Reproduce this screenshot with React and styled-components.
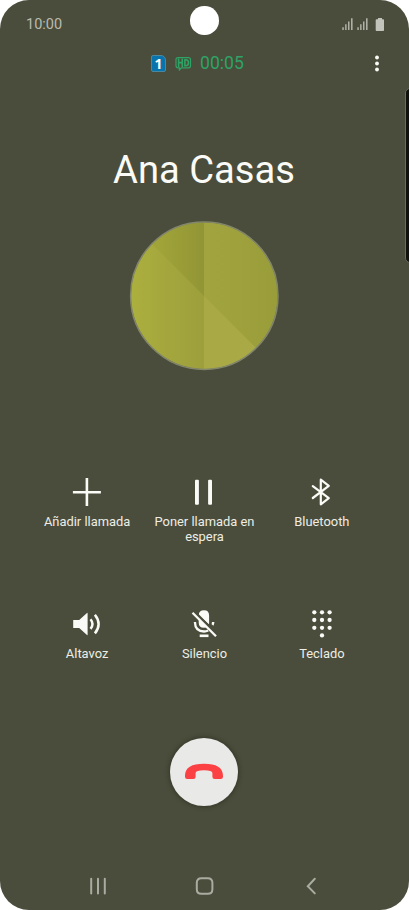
import React from "react";
import styled, { createGlobalStyle } from "styled-components";

const GlobalStyle = createGlobalStyle`
  * { box-sizing: border-box; }
  body { margin: 0; background: #fff; font-family: Roboto, "Noto Sans", sans-serif; }
  svg { display: block; flex: none; }
`;

const Screen = styled.main`
  position: relative;
  width: 409px;
  height: 910px;
  padding-right: 1px;
  display: flex;
  flex-direction: column;
  background: #4a4d3b;
  border-radius: 29px;
  overflow: hidden;
  color: #fafaf7;
`;

const StatusBar = styled.header`
  height: 48px;
  display: flex;
  align-items: center;
  justify-content: space-between;
  padding: 0 23px 0 26px;
`;

const Clock = styled.time`
  font-size: 14.5px;
  line-height: 18px;
  padding-top: 2px;
  color: #b9bbb1;
`;

const Camera = styled.div`
  position: absolute;
  left: 190px;
  top: 6px;
  width: 28.5px;
  height: 28.5px;
  border-radius: 50%;
  background: #fff;
`;

const EdgePanel = styled.div`
  position: absolute;
  right: -6px;
  top: 88px;
  width: 10px;
  height: 175px;
  border: 1px solid #6a6c60;
  border-radius: 5px;
  background: #11120e;
`;

const CallBar = styled.div`
  height: 30px;
  display: grid;
  grid-template-columns: 1fr auto 1fr;
  align-items: center;
  padding: 0 28px 0 15px;
`;

const CallInfo = styled.div`
  grid-column: 2;
  display: flex;
  align-items: center;
`;

const Duration = styled.span`
  margin-left: 8px;
  font-size: 17.6px;
  line-height: 20px;
  color: #2fa266;
`;

const MoreButton = styled.button`
  justify-self: end;
  border: 0;
  padding: 0;
  background: none;
`;

const Contact = styled.section`
  height: 292px;
  padding-top: 68px;
  display: flex;
  flex-direction: column;
  align-items: center;
`;

const Name = styled.h1`
  margin: 0 0 27px;
  font-size: 38.2px;
  line-height: 48px;
  font-weight: 400;
  white-space: nowrap;
`;

const Actions = styled.section`
  display: grid;
  grid-template-columns: repeat(3, 117.4px);
  grid-template-rows: 132px 101px;
  justify-content: center;
  margin-top: 106px;
  padding-left: 1px;
`;

const ActionButton = styled.button`
  display: flex;
  flex-direction: column;
  align-items: center;
  padding: 0;
  border: 0;
  background: none;
  color: inherit;
  font: 400 12.9px/15px Roboto, "Noto Sans", sans-serif;
`;

const ActionLabel = styled.span`
  width: 112px;
  margin-top: 6px;
  color: #ededE6;
`;

const HangUp = styled.button`
  align-self: center;
  margin: 29px 0 0;
  width: 68px;
  height: 68px;
  padding: 0;
  border: 0;
  border-radius: 50%;
  display: grid;
  place-items: center;
  background: #e9e9e7;
  box-shadow: 0 0 4px 1px rgba(35, 37, 25, 0.55);
`;

const NavBar = styled.nav`
  height: 48px;
  margin-top: auto;
  display: grid;
  grid-template-columns: repeat(3, 106.5px);
  justify-content: center;
  align-items: center;
  justify-items: center;
`;

const Signal = () => (
  <svg width="12" height="12" viewBox="0 0 12 12" fill="#aeb1a5">
    <path d="M.3 9.3h1.5V12H.3zM3.1 6.3h1.5V12H3.1zM6 3.4h1.5V12H6zM9 .3h1.6V12H9z" />
  </svg>
);

const StatusIcons = styled.div`
  display: flex;
  align-items: center;
  gap: 3px;
`;

const BatterySlot = styled.div`
  margin-left: 3px;
`;

const Battery = () => (
  <svg width="10" height="13" viewBox="0 0 10 13" fill="#c2c4bb">
    <path d="M3 0h4v1.3h1.2q.8 0 .8.8V12.2q0 .8-.8.8H1.5q-.8 0-.8-.8V2.1q0-.8.8-.8H3z" />
  </svg>
);

const SimBadge = styled.span`
  width: 15px;
  height: 17px;
  border: 1px solid #4d879d;
  border-radius: 2px 5px 2px 2px;
  background: #0874ae;
  color: #fff;
  font: 700 14px/15px "Noto Sans", sans-serif;
  text-align: center;
`;

const HdSlot = styled.span`
  margin-left: 9px;
`;

const HdIcon = () => (
  <svg width="17" height="15" viewBox="0 0 17 15" fill="none" stroke="#2fa266">
    <path d="M3 1.6h10.5q2 0 2 2v6.2q0 2-2 2H6.3L4.4 14v-2.2H3q-2 0-2-2V3.6q0-2 2-2Z" strokeWidth="1.2" />
    <path d="M3.6 2.5v8.4M7.3 2.5v8.4M3.6 6.6h3.7M9.9 3.7v6h.9q2.7 0 2.7-3t-2.7-3Z" strokeWidth="1.6" />
  </svg>
);

const MoreIcon = () => (
  <svg width="6" height="18" viewBox="0 0 6 18" fill="#fafaf7">
    <circle cx="3" cy="3.5" r="1.9" /><circle cx="3" cy="9.5" r="1.9" /><circle cx="3" cy="15.5" r="1.9" />
  </svg>
);

const Avatar = () => (
  <svg width="150" height="150" viewBox="0 0 150 150">
    <defs>
      <clipPath id="disc"><circle cx="75.3" cy="74.7" r="73.5" /></clipPath>
      <linearGradient id="left" x1="0" x2="1"><stop stopColor="#acb03d" /><stop offset=".5" stopColor="#a4a63d" /><stop offset="1" stopColor="#9d9f3c" /></linearGradient>
      <linearGradient id="top" gradientUnits="userSpaceOnUse" x1="20" x2="75" y1="0" y2="0"><stop stopColor="#a3a739" /><stop offset="1" stopColor="#929535" /></linearGradient>
      <linearGradient id="right" x1="0" x2="1"><stop stopColor="#a2a43f" /><stop offset="1" stopColor="#999d39" /></linearGradient>
    </defs>
    <g clipPath="url(#disc)">
      <path d="M0 0h75v150H0z" fill="url(#left)" />
      <path d="M0 0h75v75z" fill="url(#top)" />
      <path d="M75 0h75v150H75z" fill="url(#right)" />
      <path d="M75 75l75 75H75z" fill="#a9aa45" />
    </g>
    <circle cx="75.3" cy="74.7" r="73.7" fill="none" stroke="#82866a" strokeWidth="1.5" />
  </svg>
);

const AddIcon = () => (
  <svg width="32" height="32" viewBox="0 0 32 32" stroke="currentColor" strokeWidth="2.6">
    <path d="M15.9 2v28M1.9 16.2h28" />
  </svg>
);

const HoldIcon = () => (
  <svg width="32" height="32" viewBox="0 0 32 32" fill="currentColor">
    <rect x="7" y="3.8" width="3.9" height="25" rx="1" /><rect x="20.1" y="3.8" width="3.9" height="25" rx="1" />
  </svg>
);

const BluetoothIcon = () => (
  <svg width="32" height="32" viewBox="0 0 32 32" fill="none" stroke="currentColor" strokeWidth="2.2" strokeLinecap="round" strokeLinejoin="round">
    <path d="M6.8 10.1l16 12.1-8 6.1V3.7l8 6.2-16 12.1" />
  </svg>
);

const SpeakerIcon = () => (
  <svg width="32" height="32" viewBox="0 0 32 32" fill="none" stroke="currentColor" strokeWidth="2.5">
    <path d="M2.2 12.1h6L16 5q.6-.5.6.3v21.4q0 .8-.6.3l-7.8-7h-6z" fill="currentColor" stroke="none" />
    <path d="M19.5 11.2q4 4.8 0 9.7M23.9 6.8q7.4 9.4 0 18.6" />
  </svg>
);

const MuteIcon = () => (
  <svg width="32" height="32" viewBox="0 0 32 32" fill="none" stroke="currentColor">
    <path d="M10.7 7.3Q10.9 2.2 16 2.2t5.1 5.2v7.3q0 .9-.3 1.6zM10.7 12.1l9 6.3q-1.5 1.4-3.7 1.4-5.3 0-5.3-5.1z" fill="currentColor" stroke="none" />
    <path d="M6.9 14q.2 9.3 9.1 9.5 2.2 0 4.2-1" strokeWidth="2.3" />
    <path d="M26.4 14q-.1 2-1 3.7l-1.8-1.4.4-2.3z" fill="currentColor" stroke="none" />
    <path d="M11.7 27.8h8.8" strokeWidth="2.6" />
    <path d="M5.7 3.3l23.2 23.5" stroke="#4a4d3b" strokeWidth="3" />
    <path d="M4.5 4.8L28 28.3" strokeWidth="2.3" />
  </svg>
);

const KeypadIcon = () => (
  <svg width="32" height="32" viewBox="0 0 32 32" fill="currentColor">
    {[4.3, 12, 19.8].map((y) => [8.3, 16, 23.6].map((x) => <circle key={`${x}-${y}`} cx={x} cy={y} r="2.15" />))}
    <circle cx="16" cy="27.4" r="2.15" />
  </svg>
);

const HangUpIcon = () => (
  <svg width="40" height="18" viewBox="0 0 40 18" fill="#fb4144">
    <path d="M1 12.8C1 4.4 7.6.7 20 .7S39 4.4 39 12.8v.9q0 2.3-2.3 2.3h-6q-2.3 0-2.3-2.3V9.9Q28.3 7.3 20 7.3t-8.4 2.6v3.8q0 2.3-2.3 2.3h-6Q1 16 1 13.7z" />
  </svg>
);

const NavIcon = ({ d, width = 2 }) => (
  <svg width="20" height="20" viewBox="0 0 20 20" fill="none" stroke="#a9aca0" strokeWidth={width} strokeLinecap="round">
    <path d={d} />
  </svg>
);

const actions = [
  ["Añadir llamada", AddIcon],
  ["Poner llamada en espera", HoldIcon],
  ["Bluetooth", BluetoothIcon],
  ["Altavoz", SpeakerIcon],
  ["Silencio", MuteIcon],
  ["Teclado", KeypadIcon],
];

export default function App() {
  return (
    <>
      <GlobalStyle />
      <Screen>
        <StatusBar>
          <Clock>10:00</Clock>
          <StatusIcons>
            <Signal /><Signal />
            <BatterySlot><Battery /></BatterySlot>
          </StatusIcons>
        </StatusBar>
        <CallBar>
          <CallInfo>
            <SimBadge>1</SimBadge>
            <HdSlot><HdIcon /></HdSlot>
            <Duration>00:05</Duration>
          </CallInfo>
          <MoreButton aria-label="Más opciones"><MoreIcon /></MoreButton>
        </CallBar>
        <Contact>
          <Name>Ana Casas</Name>
          <Avatar />
        </Contact>
        <Actions>
          {actions.map(([label, Icon]) => (
            <ActionButton key={label}>
              <Icon />
              <ActionLabel>{label}</ActionLabel>
            </ActionButton>
          ))}
        </Actions>
        <HangUp aria-label="Colgar"><HangUpIcon /></HangUp>
        <NavBar>
          <NavIcon d="M3.2 2.8v14.6M10 2.8v14.6M16.8 2.8v14.6" />
          <NavIcon d="M7.4 2.2h6.4q4.6 0 4.6 4.6v6.4q0 4.6-4.6 4.6H7.4q-4.6 0-4.6-4.6V6.8q0-4.6 4.6-4.6Z" />
          <NavIcon d="M13.8 2.8L6.8 10.2l7 7.2" />
        </NavBar>
        <Camera />
        <EdgePanel />
      </Screen>
    </>
  );
}
